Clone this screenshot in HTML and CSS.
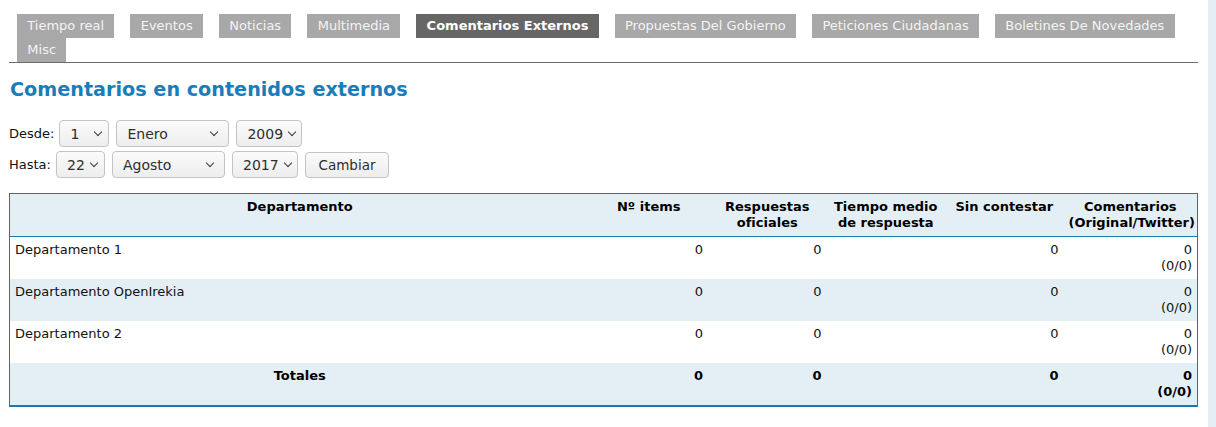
FILE: index.html
```html
<!DOCTYPE html>
<html lang="es">
<head>
<meta charset="utf-8">
<title>Comentarios en contenidos externos</title>
<link rel="stylesheet" href="styles.css">
</head>
<body>
<div class="page">
  <div class="main">
    <ul class="tabs">
      <li class="tab">Tiempo real</li>
      <li class="tab">Eventos</li>
      <li class="tab">Noticias</li>
      <li class="tab">Multimedia</li>
      <li class="tab active">Comentarios Externos</li>
      <li class="tab">Propuestas Del Gobierno</li>
      <li class="tab">Peticiones Ciudadanas</li>
      <li class="tab">Boletines De Novedades</li>
      <li class="tab">Misc</li>
    </ul>

    <h1 class="title">Comentarios en contenidos externos</h1>

    <form class="filters">
      <div class="frow">
        <label class="flabel">Desde:</label>
        <span class="sel sel-day sel-day-from"><select><option>1</option></select></span>
        <span class="sel sel-month"><select><option>Enero</option></select></span>
        <span class="sel sel-year"><select><option>2009</option></select></span>
      </div>
      <div class="frow">
        <label class="flabel">Hasta:</label>
        <span class="sel sel-day sel-day-to"><select><option>22</option></select></span>
        <span class="sel sel-month"><select><option>Agosto</option></select></span>
        <span class="sel sel-year"><select><option>2017</option></select></span>
        <button type="button" class="btn">Cambiar</button>
      </div>
    </form>

    <table class="stats">
      <colgroup>
        <col>
        <col class="c-num">
        <col class="c-num">
        <col class="c-num">
        <col class="c-num">
        <col class="c-com">
      </colgroup>
      <thead>
        <tr>
          <th>Departamento</th>
          <th>Nº items</th>
          <th>Respuestas<br>oficiales</th>
          <th>Tiempo medio<br>de respuesta</th>
          <th>Sin contestar</th>
          <th>Comentarios<br>(Original/Twitter)</th>
        </tr>
      </thead>
      <tbody>
        <tr>
          <td class="name">Departamento 1</td>
          <td>0</td><td>0</td><td></td><td>0</td><td>0<br>(0/0)</td>
        </tr>
        <tr class="alt">
          <td class="name">Departamento OpenIrekia</td>
          <td>0</td><td>0</td><td></td><td>0</td><td>0<br>(0/0)</td>
        </tr>
        <tr>
          <td class="name">Departamento 2</td>
          <td>0</td><td>0</td><td></td><td>0</td><td>0<br>(0/0)</td>
        </tr>
        <tr class="alt total">
          <td class="name">Totales</td>
          <td>0</td><td>0</td><td></td><td>0</td><td>0<br>(0/0)</td>
        </tr>
      </tbody>
    </table>
  </div>
  <div class="side"></div>
</div>
</body>
</html>
```

FILE: styles.css
```css
html, body {
  margin: 0;
  padding: 0;
  background: #fff;
}

body {
  font-family: "DejaVu Sans", "Liberation Sans", sans-serif;
  font-size: 13px;
  color: #111;
}

.page {
  display: flex;
  min-height: 100vh;
}

.main {
  flex: 0 0 1189px;
  width: 1189px;
  margin-left: 9px;
}

.side {
  flex: 1;
  margin-left: 10px;
  background: #e4eff5;
}

/* Tabs */
.tabs {
  list-style: none;
  margin: 14px 0 0 0;
  padding: 0;
  display: flex;
  flex-wrap: wrap;
  border-bottom: 1px solid #6b6b6b;
}

.tab {
  margin: 0 8px;
  padding: 0 10.3px;
  height: 24px;
  line-height: 24px;
  background: #a8a8a8;
  color: #f4f4f4;
  font-size: 13px;
  white-space: nowrap;
}

.tab.active {
  background: #666;
  color: #fff;
  font-weight: bold;
}

/* Title */
.title {
  margin: 15px 0 0 1px;
  font-size: 19.2px;
  line-height: 24px;
  font-weight: bold;
  color: #1a7cb8;
}

/* Filters */
.filters {
  margin-top: 18px;
  display: flex;
  flex-direction: column;
  gap: 4px;
}

.frow {
  display: flex;
  align-items: center;
  gap: 7px;
}

.flabel {
  margin-right: -2px;
  color: #111;
}

.sel {
  position: relative;
  display: inline-block;
  height: 27px;
}

.sel select {
  -webkit-appearance: none;
  appearance: none;
  width: 100%;
  height: 27px;
  box-sizing: border-box;
  margin: 0;
  padding: 0 0 0 10px;
  border: 1px solid #c4c4c4;
  border-radius: 4px;
  background: linear-gradient(#fbfbfb, #ededed);
  font-family: "DejaVu Sans", "Liberation Sans", sans-serif;
  font-size: 14px;
  color: #2e2e2e;
}

.sel::after {
  content: "";
  position: absolute;
  right: 10px;
  top: 9px;
  width: 5px;
  height: 5px;
  border-right: 1.6px solid #3a3a3a;
  border-bottom: 1.6px solid #3a3a3a;
  transform: rotate(45deg);
  pointer-events: none;
}

.sel-day-from { width: 50px; }
.sel-day-to { width: 49px; }
.sel-month { width: 113px; }
.sel-year { width: 66px; }

.sel-month::after { right: 12px; }
.sel-year::after { right: 7px; }
.sel-day::after { right: 8px; }

.btn {
  width: 84px;
  height: 26px;
  margin: 0;
  padding: 0;
  border: 1px solid #c4c4c4;
  border-radius: 4px;
  background: linear-gradient(#fbfbfb, #ededed);
  font-family: "DejaVu Sans", "Liberation Sans", sans-serif;
  font-size: 13.5px;
  color: #2e2e2e;
}

/* Table */
.stats {
  margin-top: 15px;
  width: 1189px;
  border-collapse: collapse;
  table-layout: fixed;
  border: 1px solid #1b79b2;
  border-bottom-width: 2px;
}

.c-num { width: 118.5px; }
.c-com { width: 134px; }

.stats th,
.stats td {
  padding: 5px 5px;
  line-height: 16px;
  height: 32px;
  vertical-align: top;
  font-size: 13px;
}

.stats thead th {
  background: #e4eff5;
  font-weight: bold;
  text-align: center;
  color: #000;
  border-bottom: 1px solid #1b79b2;
}

.stats td {
  text-align: right;
  color: #111;
}

.stats td.name {
  text-align: left;
}

.stats tr.alt td {
  background: #e4eff5;
}

.stats tr.total td {
  font-weight: bold;
  color: #000;
}

.stats tr.total td.name {
  text-align: center;
}
```
